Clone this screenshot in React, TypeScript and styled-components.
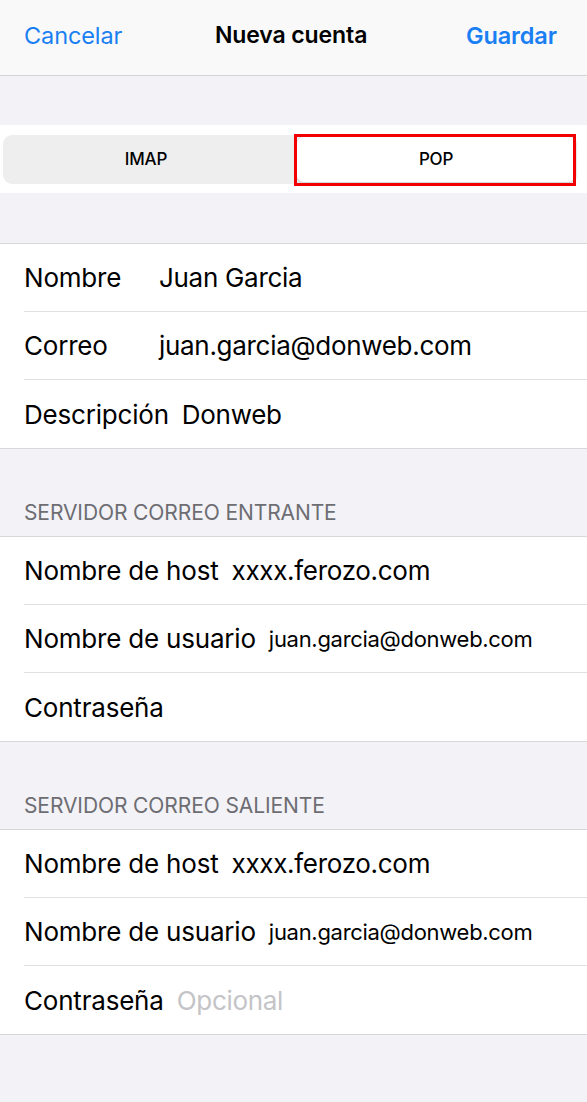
import React from 'react';
import styled, { createGlobalStyle } from 'styled-components';

const GlobalStyle = createGlobalStyle`
  html, body {
    margin: 0;
    padding: 0;
    background: #f2f2f7;
  }
  body {
    font-family: Inter, "Liberation Sans", Arial, sans-serif;
    color: #000;
  }
`;

const Page = styled.div`
  width: 587px;
  min-height: 1102px;
  background: #f2f2f7;
  display: flex;
  flex-direction: column;
`;

const NavBar = styled.div`
  height: 76px;
  display: flex;
  align-items: center;
  justify-content: space-between;
  padding: 0 30px 5px 24px;
  box-sizing: border-box;
  background: #f9f9f9;
  border-bottom: 1px solid #d4d4d6;
`;

const NavButton = styled.span<{ bold?: boolean }>`
  color: #1a7ff2;
  font-size: 23.5px;
  font-weight: ${(p) => (p.bold ? 600 : 400)};
  letter-spacing: -0.1px;
`;

const NavTitle = styled.span`
  font-size: 23px;
  font-weight: 600;
  letter-spacing: -0.1px;
  margin-right: 6px;
`;

const SegmentRow = styled.div`
  margin-top: 49px;
  background: #fff;
  height: 68px;
  display: flex;
  align-items: center;
  padding: 0 10px 0 3px;
`;

const Segmented = styled.div`
  flex: 1;
  height: 49px;
  box-sizing: border-box;
  padding: 2px;
  display: grid;
  grid-template-columns: 292px 1fr;
  background: #eeeeef;
  border-radius: 9px;
`;

const Segment = styled.div<{ active?: boolean }>`
  display: flex;
  align-items: center;
  justify-content: center;
  padding-right: ${(p) => (p.active ? '0' : '10px')};
  font-size: 17px;
  font-weight: 500;
  letter-spacing: -0.2px;
  border-radius: 7px;
  position: relative;
  background: ${(p) => (p.active ? '#fff' : 'transparent')};
  box-shadow: ${(p) => (p.active ? '0 2px 4px rgba(0,0,0,0.12)' : 'none')};
`;

const Highlight = styled.div`
  position: absolute;
  inset: -3px -1px -4px -3px;
  border: 3px solid #f20000;
  pointer-events: none;
`;

const SectionHeader = styled.div<{ space: number }>`
  height: ${(p) => p.space}px;
  display: flex;
  align-items: flex-end;
  padding: 0 24px 11px;
  box-sizing: border-box;
  color: #6d6d72;
  font-size: 21px;
  letter-spacing: -0.1px;
  border-bottom: 1px solid #d8d8dc;
`;

const Group = styled.div`
  background: #fff;
  border-bottom: 1px solid #d8d8dc;
`;

const Row = styled.div<{ last?: boolean }>`
  margin-left: 24px;
  height: 68px;
  display: flex;
  align-items: center;
  border-bottom: ${(p) => (p.last ? 'none' : '1px solid #e0e0e3')};
  box-sizing: border-box;
`;

const Label = styled.span`
  min-width: 122px;
  font-size: 26px;
  letter-spacing: -0.2px;
  margin-right: 13px;
  white-space: nowrap;
`;

const Value = styled.span<{ small?: boolean; placeholder?: boolean }>`
  font-size: ${(p) => (p.small ? '22px' : '26px')};
  letter-spacing: -0.3px;
  color: ${(p) => (p.placeholder ? '#c4c4c7' : '#000')};
  white-space: nowrap;
`;

type Field = { label: string; value?: string; small?: boolean; placeholder?: string };

const account: Field[] = [
  { label: 'Nombre', value: 'Juan Garcia' },
  { label: 'Correo', value: 'juan.garcia@donweb.com' },
  { label: 'Descripción', value: 'Donweb' },
];

const incoming: Field[] = [
  { label: 'Nombre de host', value: 'xxxx.ferozo.com' },
  { label: 'Nombre de usuario', value: 'juan.garcia@donweb.com', small: true },
  { label: 'Contraseña' },
];

const outgoing: Field[] = [
  { label: 'Nombre de host', value: 'xxxx.ferozo.com' },
  { label: 'Nombre de usuario', value: 'juan.garcia@donweb.com', small: true },
  { label: 'Contraseña', placeholder: 'Opcional' },
];

function FieldGroup({ fields }: { fields: Field[] }) {
  return (
    <Group>
      {fields.map((f, i) => (
        <Row key={f.label} last={i === fields.length - 1}>
          <Label>{f.label}</Label>
          {f.value && <Value small={f.small}>{f.value}</Value>}
          {f.placeholder && <Value placeholder>{f.placeholder}</Value>}
        </Row>
      ))}
    </Group>
  );
}

export default function App() {
  return (
    <Page>
      <GlobalStyle />
      <NavBar>
        <NavButton>Cancelar</NavButton>
        <NavTitle>Nueva cuenta</NavTitle>
        <NavButton bold>Guardar</NavButton>
      </NavBar>
      <SegmentRow>
        <Segmented>
          <Segment>IMAP</Segment>
          <Segment active>
            POP
            <Highlight />
          </Segment>
        </Segmented>
      </SegmentRow>
      <SectionHeader space={51} />
      <FieldGroup fields={account} />
      <SectionHeader space={88}>SERVIDOR CORREO ENTRANTE</SectionHeader>
      <FieldGroup fields={incoming} />
      <SectionHeader space={88}>SERVIDOR CORREO SALIENTE</SectionHeader>
      <FieldGroup fields={outgoing} />
    </Page>
  );
}
